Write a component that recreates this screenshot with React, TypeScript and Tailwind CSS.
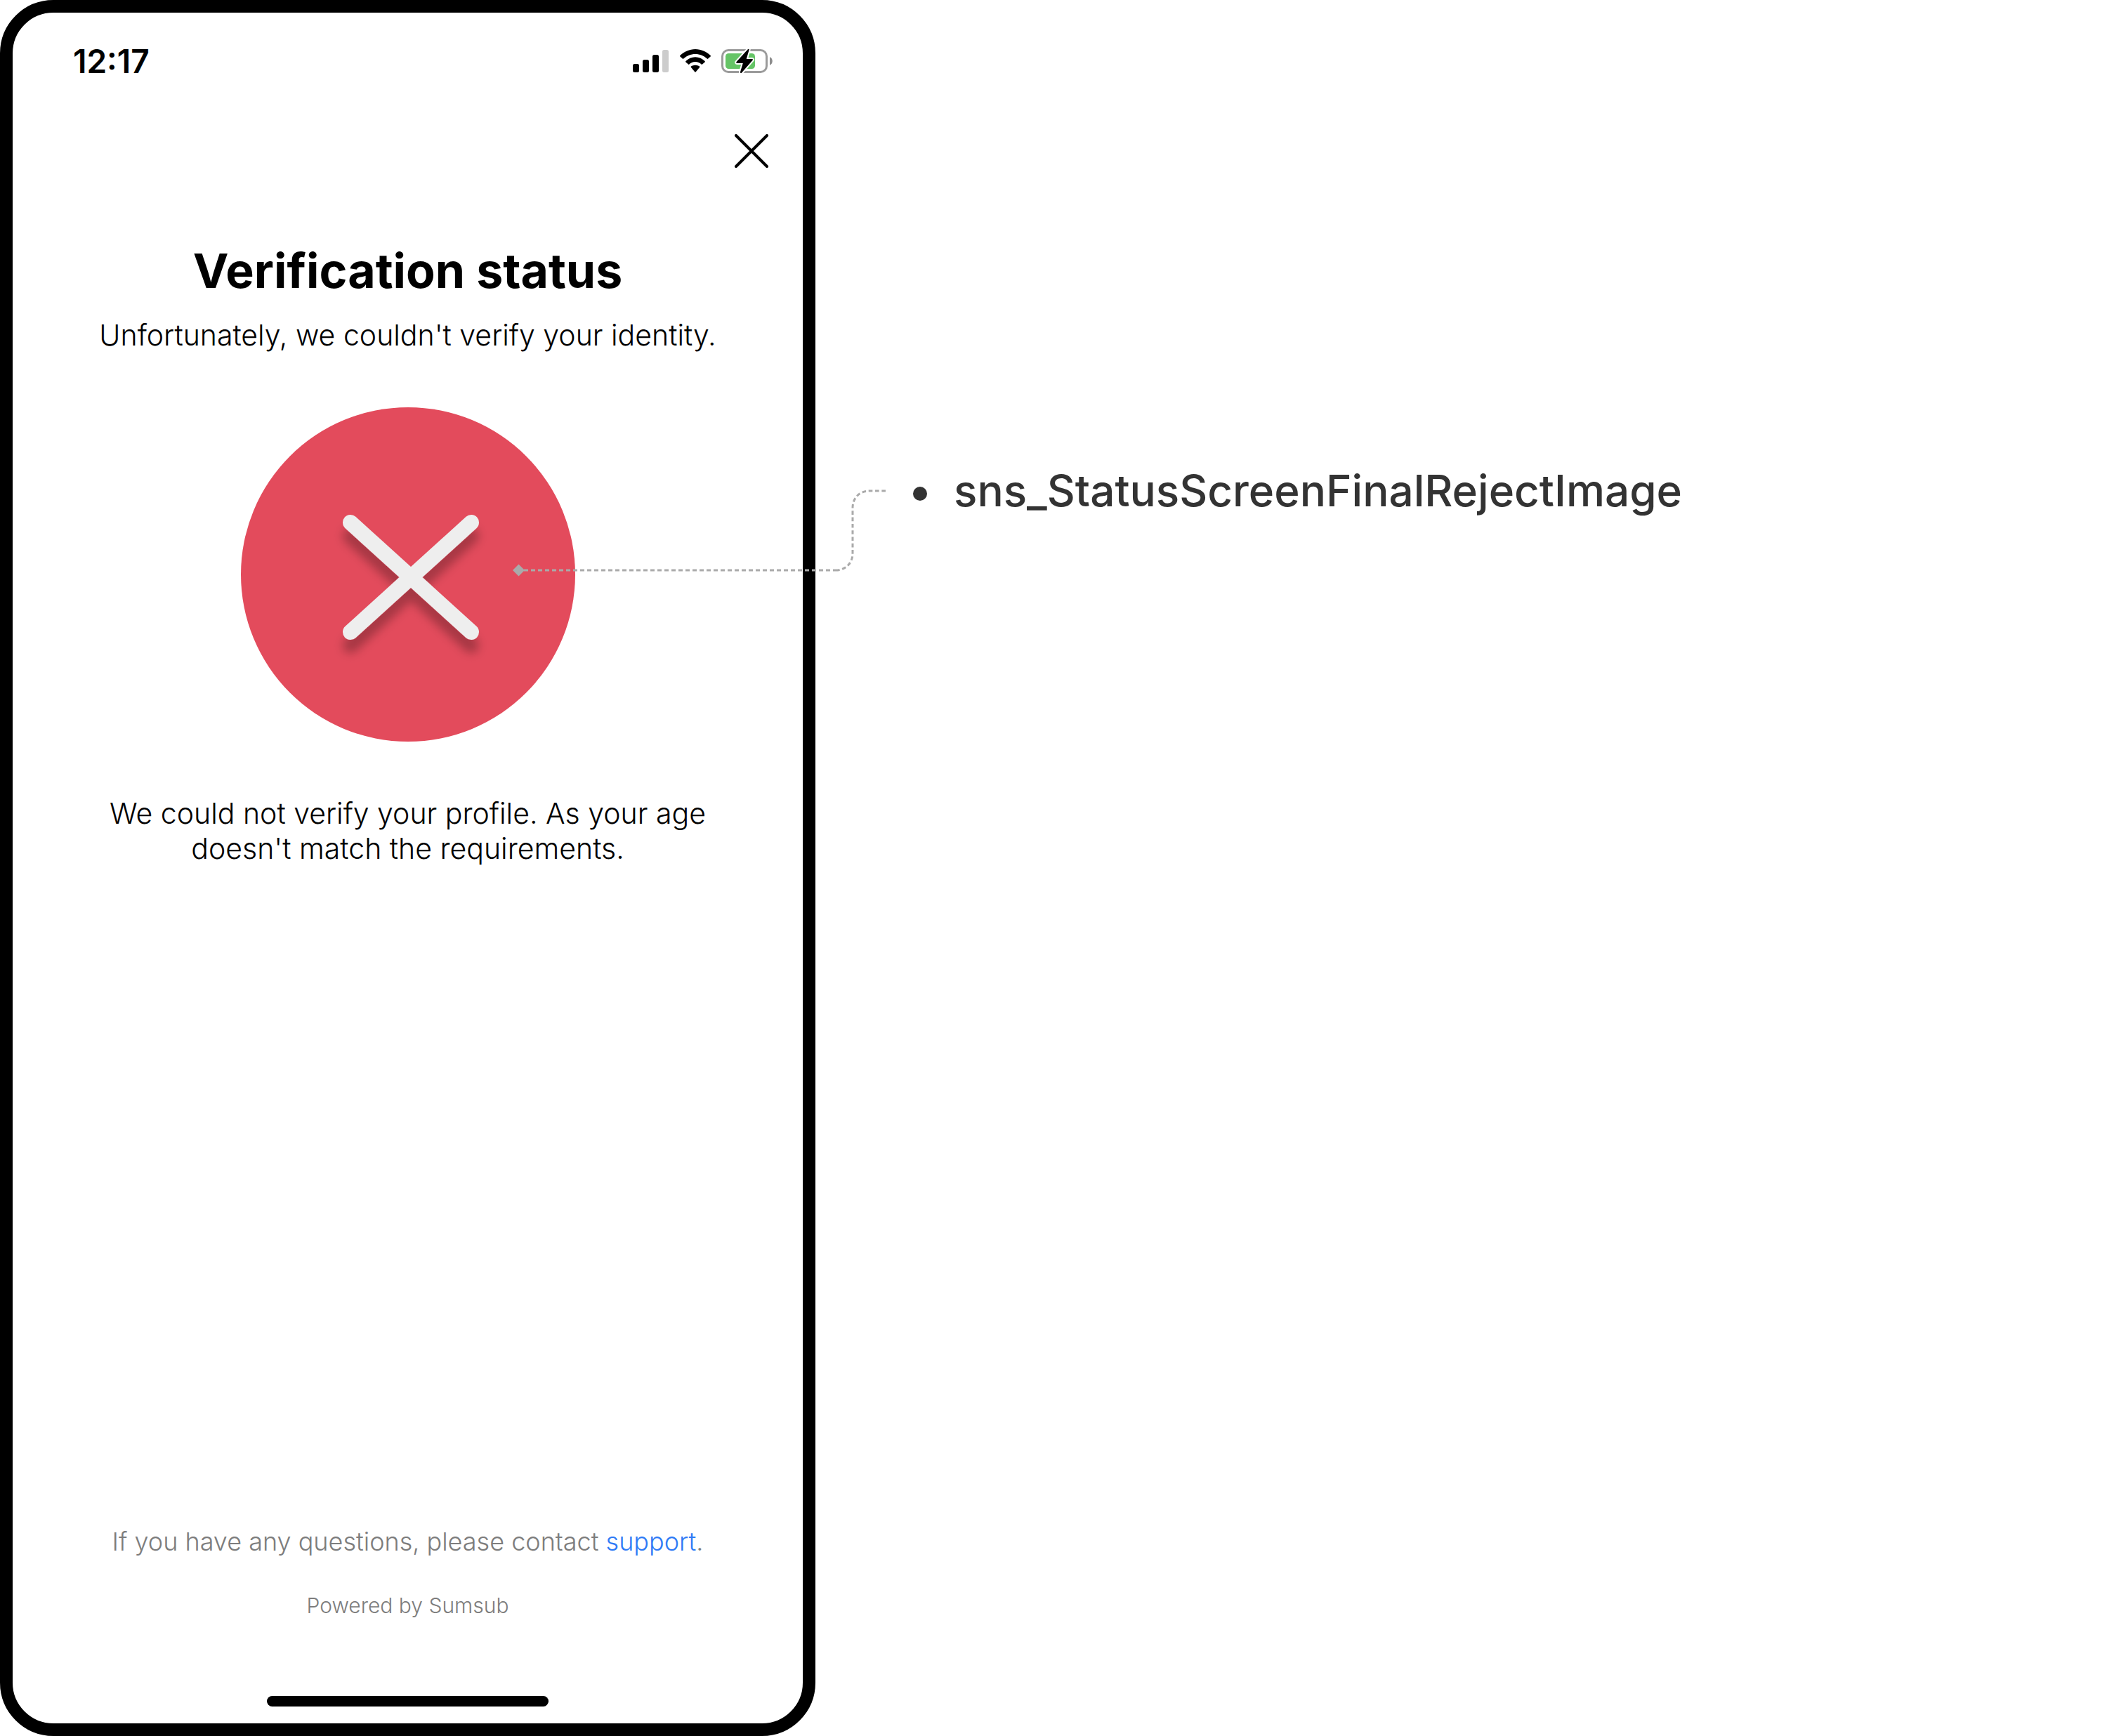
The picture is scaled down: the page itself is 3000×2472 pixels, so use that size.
function SignalIcon() {
  return (
    <svg className="h-[34px] w-[52px]" viewBox="0 0 52 34" aria-hidden="true">
      <rect x="0" y="21" width="9" height="12" rx="2.5" fill="#000" />
      <rect x="14" y="15" width="9" height="18" rx="2.5" fill="#000" />
      <rect x="28" y="8" width="9" height="25" rx="2.5" fill="#000" />
      <rect x="42" y="1" width="9" height="32" rx="2.5" fill="#ccc" />
    </svg>
  );
}

function WifiIcon() {
  return (
    <svg className="h-[34px] w-[46px]" viewBox="0 0 46 34" aria-hidden="true">
      <path d="M23 7 C29.5 7 35.4 9.5 39.8 13.6 C40.2 14 40.8 14 41.2 13.6 L44.6 10.6 C45.1 10.2 45.1 9.5 44.6 9.1 C38.9 3.5 31.3 0 23 0 C14.7 0 7.1 3.5 1.4 9.1 C0.9 9.5 0.9 10.2 1.4 10.6 L4.8 13.6 C5.2 14 5.8 14 6.2 13.6 C10.6 9.5 16.5 7 23 7 Z" />
      <path d="M23 18 C26.4 18 29.4 19.4 31.6 21.6 C32 22 32.6 22 33 21.6 L36.6 18.4 C37 18 37 17.4 36.6 17 C33 13.4 28.2 11.2 23 11.2 C17.8 11.2 13 13.4 9.4 17 C9 17.4 9 18 9.4 18.4 L13 21.6 C13.4 22 14 22 14.4 21.6 C16.6 19.4 19.6 18 23 18 Z" />
      <path d="M29 25.9 C29.5 25.5 29.4 24.9 29 24.6 C27.3 23.4 25.2 22.7 23 22.7 C20.8 22.7 18.7 23.4 17 24.6 C16.6 24.9 16.5 25.5 17 25.9 L22.2 32.2 C22.7 32.8 23.3 32.8 23.8 32.2 Z" />
    </svg>
  );
}

function BatteryIcon() {
  return (
    <svg className="h-[36px] w-[73px]" viewBox="0 0 73 36" aria-hidden="true">
      <rect x="1.5" y="2.5" width="63" height="31" rx="8.5" fill="none" stroke="#9b9b9b" strokeWidth="3" />
      <path d="M69 12 C74 14.5 74 21.5 69 24 Z" fill="#8c8c8c" />
      <rect x="6" y="7" width="42" height="22" rx="4.5" fill="#65c466" />
      <path
        d="M37.8 1.2 L21.6 19 C20.8 20 21.3 21 22.4 21 L30.8 21 L27 33.6 C26.7 35 28.2 35.6 29.1 34.6 L44.6 16.8 C45.4 15.8 45 14.9 43.8 14.9 L35.8 14.9 L39.6 2 C39.9 0.6 38.7 0.2 37.8 1.2 Z"
        fill="#000"
        stroke="#fff"
        strokeWidth="4"
        strokeLinejoin="round"
        paintOrder="stroke"
      />
    </svg>
  );
}

function CloseIcon() {
  return (
    <svg className="size-[48px]" viewBox="0 0 48 48" aria-hidden="true">
      <path d="M2 2 L46 46 M46 2 L2 46" stroke="#000" strokeWidth="4" strokeLinecap="round" />
    </svg>
  );
}

function RejectImage() {
  return (
    <svg className="size-[476px]" viewBox="0 0 476 476" role="img" aria-label="Rejected">
      <defs>
        <filter id="cross-shadow" x="-20%" y="-20%" width="140%" height="150%">
          <feDropShadow dx="0" dy="19" stdDeviation="7" floodColor="#000" floodOpacity="0.27" />
        </filter>
      </defs>
      <circle cx="238" cy="238" r="238" fill="#e34b5c" />
      <path
        d="M156 164 L328 320 M328 164 L156 320"
        stroke="#eeeeee"
        strokeWidth="22"
        strokeLinecap="round"
        filter="url(#cross-shadow)"
      />
    </svg>
  );
}

function Connector() {
  return (
    <svg
      className="absolute top-[110px] left-[380px] h-[140px] w-[550px]"
      viewBox="0 0 550 140"
      fill="none"
      aria-hidden="true"
    >
      <path d="M7 122 L15.5 113.5 L24 122 L15.5 130.5 Z" fill="#aaa" />
      <path d="M23 122 H467" stroke="#aaa" strokeWidth="3" strokeDasharray="6 4" />
      <path
        d="M467 122 C481 122 491 112 491 98 V33 C491 19 501 9 515 9 H541"
        stroke="#aaa"
        strokeWidth="3"
        strokeDasharray="5.6 3.7"
      />
    </svg>
  );
}

export default function App() {
  return (
    <div className="flex min-h-screen bg-white font-['Inter',sans-serif]">
      <main className="flex w-full max-w-[1161px] flex-col items-center rounded-[76px] border-[18px] border-black bg-white pb-6 text-black">
        <header className="flex h-[138px] w-full items-center justify-between pr-[43px] pl-[86px]">
          <time className="text-[46px] leading-[50px] font-semibold">12:17</time>
          <div className="flex items-center gap-[14px]">
            <SignalIcon />
            <WifiIcon />
            <BatteryIcon />
          </div>
        </header>

        <div className="flex w-full justify-end pt-[35px] pr-[49px]">
          <button type="button" aria-label="Close">
            <CloseIcon />
          </button>
        </div>

        <h1 className="mt-[106px] text-[68px] leading-[80px] font-bold">Verification status</h1>
        <p className="mt-[27px] text-[41px] leading-[50px] font-light">
          Unfortunately, we couldn't verify your identity.
        </p>

        <div className="relative mt-[78px]">
          <RejectImage />
          <Connector />
        </div>

        <p className="mt-[77px] max-w-[880px] text-center text-[41px] leading-[50px] font-light">
          We could not verify your profile. As your age doesn't match the requirements.
        </p>

        <footer className="mt-auto flex flex-col items-center text-[#7d7d7d]">
          <p className="text-[36px] leading-[50px] font-light">
            If you have any questions, please contact{" "}
            <a href="#support" className="text-[#2f7bf6]">
              support
            </a>
            .
          </p>
          <p className="mt-[46px] text-[30px] leading-[40px] font-light">Powered by Sumsub</p>
          <div className="mt-[109px] h-[15px] w-[401px] rounded-full bg-black" />
        </footer>
      </main>

      <aside className="flex-1 pt-[659px] pl-[139px]">
        <ul>
          <li className="flex items-center gap-[38px] text-[62px] leading-[80px] font-medium text-[#333]">
            <span className="mt-2 size-5 rounded-full bg-[#333]" />
            sns_StatusScreenFinalRejectImage
          </li>
        </ul>
      </aside>
    </div>
  );
}
